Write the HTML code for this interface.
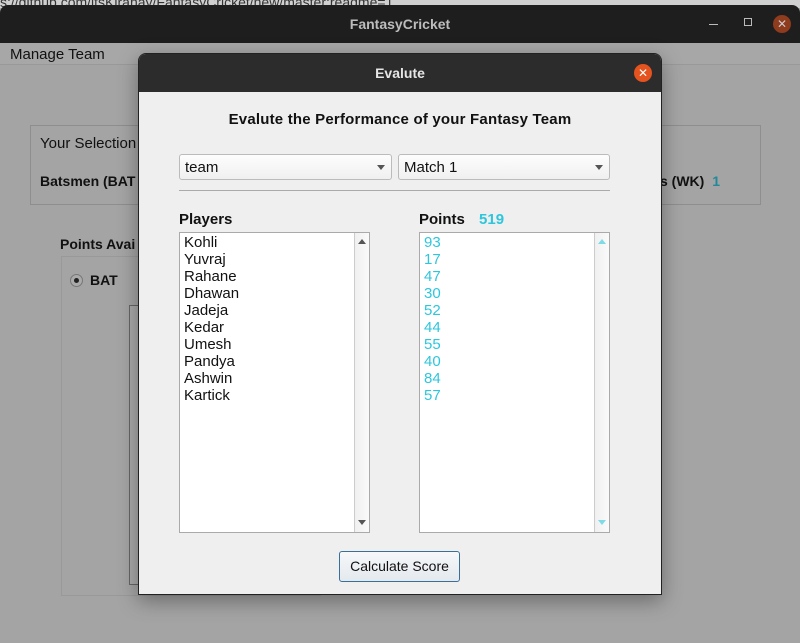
<!DOCTYPE html>
<html><head><style>
*{box-sizing:border-box;margin:0;padding:0}
body{width:800px;height:643px;overflow:hidden;background:#a4a4a4;font-family:"Liberation Sans",sans-serif;font-size:14px;color:#111;position:relative}
.a{position:absolute}
.b{font-weight:bold}
.list div{height:17px;line-height:17px;padding-left:4px}
</style></head><body>
<div class="a" style="left:0;top:0;width:800px;height:8px;background:#d0d0d0;overflow:hidden;font-size:14px;color:#333;line-height:4px">s://github.com/itsKiranay/FantasyCricket/new/master:readme=1</div>
<div class="a" style="left:0;top:5px;width:800px;height:38px;background:#1e1e1e;border-radius:8px 8px 0 0"></div>
<div class="a b" style="left:0;top:16px;width:800px;text-align:center;color:#bdbdbd;font-size:14px">FantasyCricket</div>
<div class="a" style="left:709px;top:24px;width:9px;height:1px;background:#bbb"></div>
<div class="a" style="left:744px;top:18px;width:8px;height:8px;border:1px solid #bbb"></div>
<div class="a" style="left:773px;top:15px;width:18px;height:18px;border-radius:50%;background:#8f3b1d;color:#ccc;text-align:center;line-height:18px;font-size:12px">✕</div>
<div class="a" style="left:0;top:43px;width:800px;height:22px;background:#a7a7a7;border-bottom:1px solid #999"></div>
<div class="a" style="left:10px;top:46px;color:#111;font-size:15px">Manage Team</div>
<div class="a" style="left:30px;top:125px;width:731px;height:80px;border:1px solid #8e8e8e"></div>
<div class="a" style="left:40px;top:135px;font-size:15px">Your Selection</div>
<div class="a b" style="left:40px;top:173px">Batsmen (BAT</div>
<div class="a b" style="left:660px;top:173px">s (WK) <span style="color:#22889a;margin-left:4px">1</span></div>
<div class="a b" style="left:60px;top:236px">Points Avai</div>
<div class="a" style="left:61px;top:256px;width:260px;height:340px;border:1px solid #999"></div>
<div class="a" style="left:70px;top:274px;width:13px;height:13px;border-radius:50%;border:1px solid #777;background:#aaa"><div class="a" style="left:3px;top:3px;width:5px;height:5px;border-radius:50%;background:#222"></div></div>
<div class="a b" style="left:90px;top:272px">BAT</div>
<div class="a" style="left:129px;top:305px;width:20px;height:280px;border:1px solid #666;background:#a9a9a9"></div>
<div class="a" style="left:138px;top:53px;width:524px;height:542px;background:#efefef;border:1px solid #222;border-radius:8px 8px 0 0;box-shadow:0 6px 20px rgba(0,0,0,.35);overflow:hidden">
 <div class="a" style="left:0;top:0;width:524px;height:38px;background:#2c2c2c"></div>
 <div class="a b" style="left:0;top:11px;width:522px;text-align:center;color:#e6e6e6">Evalute</div>
 <div class="a" style="left:495px;top:10px;width:18px;height:18px;border-radius:50%;background:#e5531f;color:#fff;text-align:center;line-height:18px;font-size:12px">✕</div>
 <div class="a b" style="left:0;top:57px;width:522px;text-align:center;font-size:15px;letter-spacing:0.2px">Evalute the Performance of your Fantasy Team</div>
 <div class="a" style="left:40px;top:100px;width:213px;height:26px;border:1px solid #bbb;border-radius:3px;background:linear-gradient(#fdfdfd,#f0f0f0);padding:4px 5px;font-size:15px">team<span class="a" style="right:6px;top:10px;border:4px solid transparent;border-top:5px solid #555"></span></div>
 <div class="a" style="left:259px;top:100px;width:212px;height:26px;border:1px solid #bbb;border-radius:3px;background:linear-gradient(#fdfdfd,#f0f0f0);padding:4px 5px;font-size:15px">Match 1<span class="a" style="right:6px;top:10px;border:4px solid transparent;border-top:5px solid #555"></span></div>
 <div class="a" style="left:40px;top:136px;width:431px;height:1px;background:#aaa"></div>
 <div class="a b" style="left:40px;top:157px;font-size:15px">Players</div>
 <div class="a b" style="left:280px;top:157px;font-size:15px">Points <span style="color:#2ec6dc;margin-left:10px">519</span></div>
 <div class="a list" style="left:40px;top:178px;width:191px;height:301px;border:1px solid #aaa;background:#fff;padding-top:1px;font-size:15px">
  <div>Kohli</div><div>Yuvraj</div><div>Rahane</div><div>Dhawan</div><div>Jadeja</div><div>Kedar</div><div>Umesh</div><div>Pandya</div><div>Ashwin</div><div>Kartick</div>
  <div class="a" style="right:0;top:0;width:15px;height:299px;background:linear-gradient(90deg,#f0f0f0,#fafafa);border-left:1px solid #ccc"><span class="a" style="left:3px;top:2px;border:4px solid transparent;border-bottom:5px solid #555"></span><span class="a" style="left:3px;bottom:3px;border:4px solid transparent;border-top:5px solid #555"></span></div>
 </div>
 <div class="a list" style="left:280px;top:178px;width:191px;height:301px;border:1px solid #aaa;background:#fff;padding-top:1px;color:#2ec6dc;font-size:15px">
  <div>93</div><div>17</div><div>47</div><div>30</div><div>52</div><div>44</div><div>55</div><div>40</div><div>84</div><div>57</div>
  <div class="a" style="right:0;top:0;width:15px;height:299px;background:linear-gradient(90deg,#f0f0f0,#fafafa);border-left:1px solid #ccc"><span class="a" style="left:3px;top:2px;border:4px solid transparent;border-bottom:5px solid #7ddbe8"></span><span class="a" style="left:3px;bottom:3px;border:4px solid transparent;border-top:5px solid #7ddbe8"></span></div>
 </div>
 <div class="a" style="left:200px;top:497px;width:121px;height:31px;border:1px solid #3a6f98;border-radius:3px;background:linear-gradient(#f6f8fa,#e4e9ee);text-align:center;line-height:29px">Calculate Score</div>
</div>
</body></html>
